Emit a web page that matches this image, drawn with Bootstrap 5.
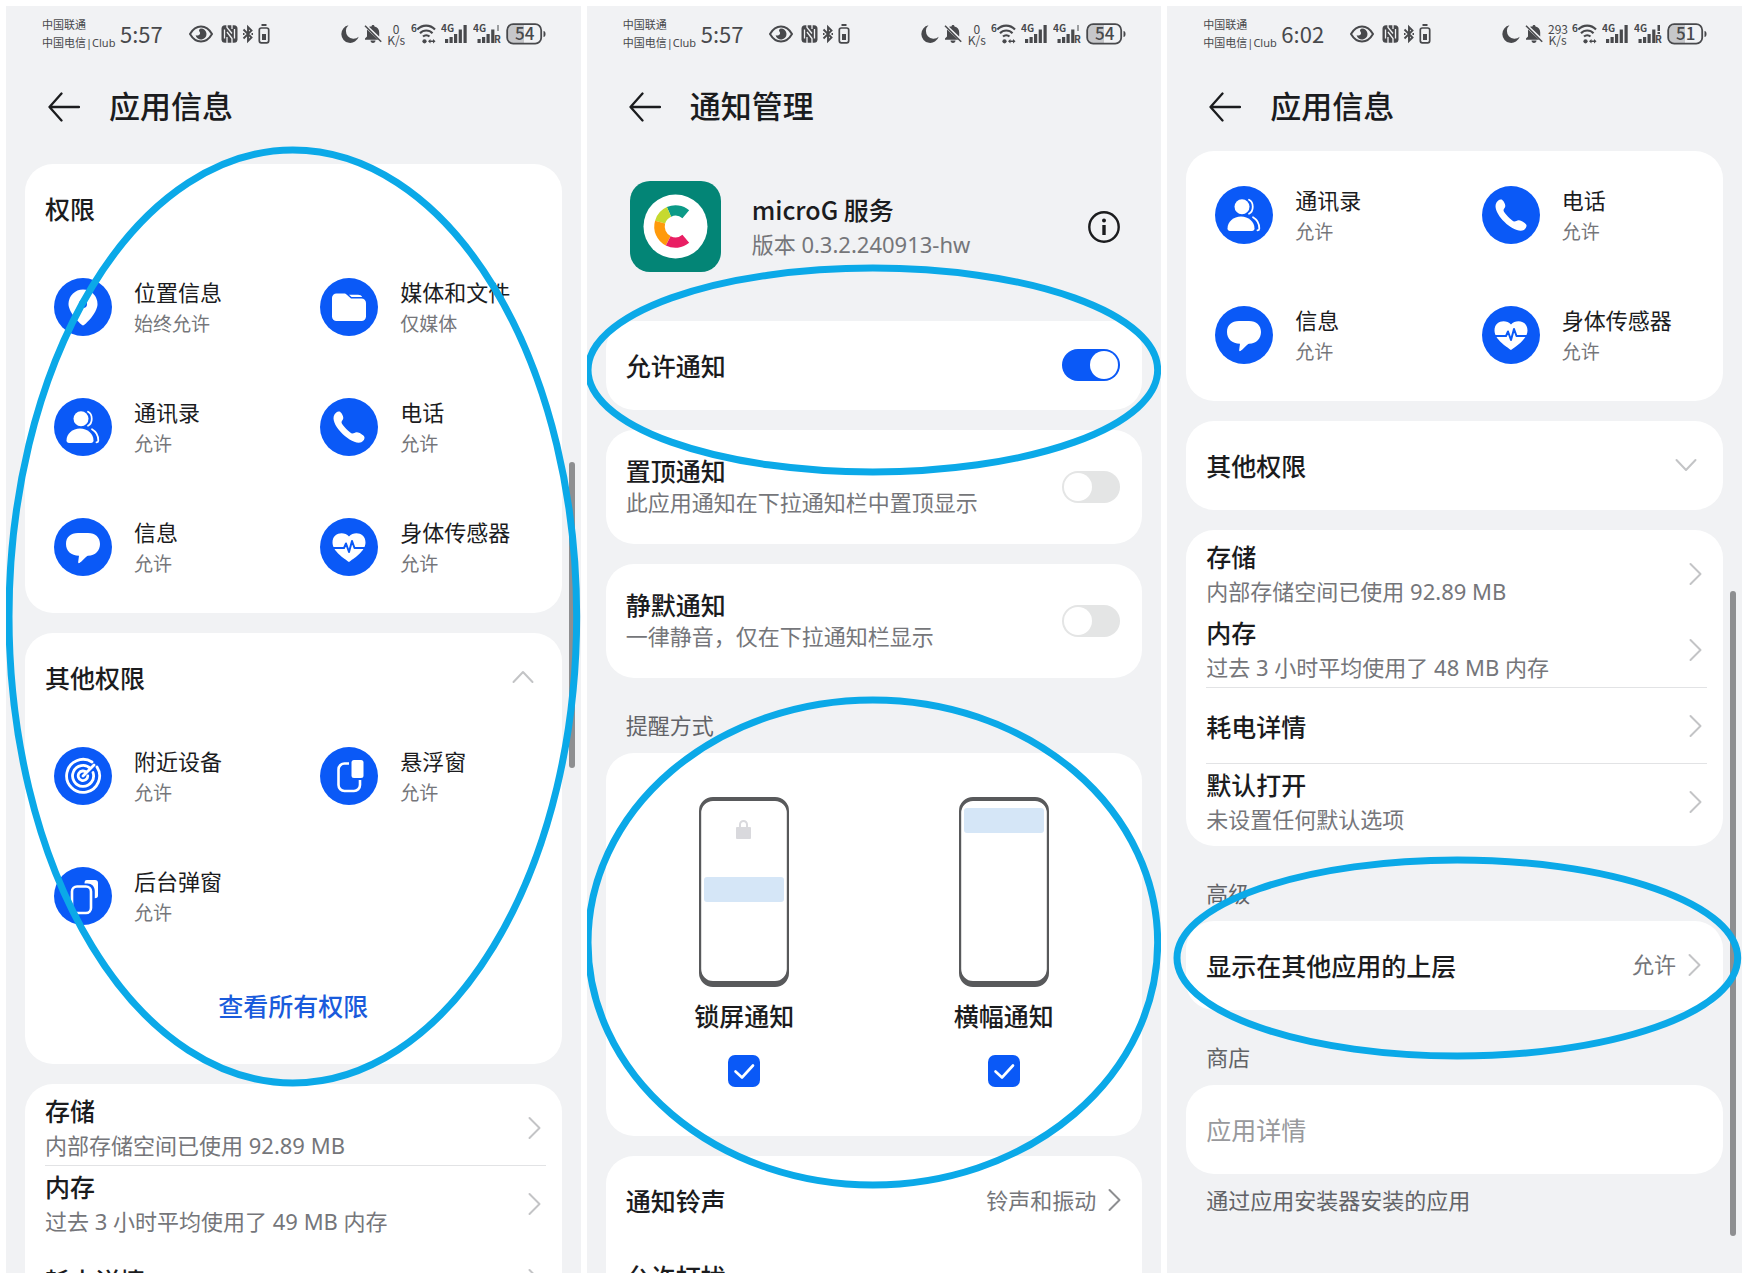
<!DOCTYPE html>
<html lang="zh-CN">
<head>
<meta charset="utf-8">
<meta name="viewport" content="width=device-width, initial-scale=1">
<title>microG 服务 权限设置</title>
<link href="https://cdn.jsdelivr.net/npm/bootstrap@5.3.0/dist/css/bootstrap.min.css" rel="stylesheet">
<style>
  :root { --ink:#1b1c1e; --sub:#75767a; --accent:#0a59f7; --ring:#0ba9e8; --edge:19px; }
  body { background:#fff; color:var(--ink); font-family:"Noto Sans CJK SC","Noto Sans",sans-serif; font-size:22px; overflow:hidden; }
  a, a:hover { color:inherit; text-decoration:none; }
  .screens { gap:6px; padding:6px 6px 7px; height:100vh; min-height:480px; }
  .phone-screen { position:relative; flex:1 1 0; min-width:0; overflow:hidden; background:#f1f2f4; }

  /* status bar */
  .statusbar { height:56px; padding:0 35px 0 36px; color:#48494c; }
  .carrier { font-family:"Noto Sans","Noto Sans CJK SC",sans-serif; font-size:11px; line-height:18px; white-space:nowrap; width:78px; }
  .clock { font-size:22px; line-height:32px; padding-bottom:2px; }
  .net-speed { font-size:12px; line-height:11px; text-align:center; width:19px; white-space:nowrap; }
  .statusbar svg { display:block; flex:none; fill:currentColor; }
  .statusbar .spacer-eye { margin-left:26px; }
  .status-right { gap:5px; }
  .status-right text { font-size:10px; font-weight:700; }
  .status-right .level { font-size:17px; font-weight:500; }

  /* title bar */
  .titlebar { height:89px; padding:0 42px; gap:29px; }
  .titlebar h1 { font-size:31px; line-height:40px; font-weight:500; margin:0; padding-bottom:4px; }
  .icon-btn { background:none; border:0; padding:0; line-height:0; color:var(--ink); }
  .app-head { padding:30px 41px 49px 43px; gap:31px; }

  /* tiles */
  .tile { background:#fff; border-radius:28px; margin:0 var(--edge); }
  .tile + .tile { margin-top:20px; }
  .first-tile { margin-top:13px; }
  .tile-title { font-size:25px; line-height:36px; font-weight:500; margin:0; }
  .tile-head { padding:26px 28px 21px 20px; width:100%; }
  .one-line { min-height:89px; padding:0 22px 2px 20px; }
  .two-line { min-height:114px; padding:0 22px 0 20px; }
  .two-line label { padding-bottom:2px; }
  .two-line .tile-title, .two-line .hint { line-height:32px; }
  .hint { font-family:"Noto Sans","Noto Sans CJK SC",sans-serif; color:var(--sub); line-height:35px; margin:0; font-size:22px; }
  .section-label { font-size:22px; line-height:34px; margin:0; padding:29px 0 12px 39px; color:#626367; font-weight:400; }
  .footnote { line-height:34px; margin:0; padding:8px 39px; color:#626367; }

  .perm-grid { padding:0 4px 6px 0; }
  .perm { min-height:120px; padding-left:29px; gap:22px; }
  .perm svg { flex:none; }
  .perm-name { line-height:31px; white-space:nowrap; }
  .perm-state { font-size:19px; line-height:31px; padding-bottom:1px; color:var(--sub); }
  .all-link { display:block; text-align:center; font-size:25px; line-height:36px; padding:25px 0 41px; font-weight:500; }
  .all-link, .all-link:hover { color:#1a5bdc; }

  .rows { padding:6px 16px 6px 20px; }
  .line-row { height:76px; padding-right:5px; }
  .line-row .tile-title { line-height:35px; }
  .line-row.ruled { box-shadow:inset 0 -1px #e2e3e5; }
  .chev { flex:none; fill:none; stroke:#c3c4c6; stroke-width:2; stroke-linecap:round; stroke-linejoin:round; }
  .chev.dark { stroke:#8d8e91; }
  .muted-title { color:#98999c; font-weight:400; }

  /* switches and tick boxes */
  .form-switch.toggle { padding:0; margin:0; min-height:0; line-height:0; }
  .form-switch.toggle .form-check-input { width:58px; height:32px; margin:0; border:0; background-color:#e4e5e5;
    background-image:url("data:image/svg+xml,%3csvg xmlns='http://www.w3.org/2000/svg' viewBox='0 0 32 32'%3e%3ccircle cx='16' cy='16' r='14' fill='white'/%3e%3c/svg%3e"); }
  .form-switch.toggle .form-check-input:checked { background-color:var(--accent); }
  .tick.form-check-input { float:none; width:32px; height:32px; margin:22px 0 0; border-radius:7px; border:0; display:block; }
  .tick.form-check-input:checked { background-color:var(--accent);
    background-image:url("data:image/svg+xml,%3csvg xmlns='http://www.w3.org/2000/svg' viewBox='0 0 32 32'%3e%3cpath d='M7.500 16.500l6.500 6 11-12' fill='none' stroke='white' stroke-width='2.600' stroke-linecap='round' stroke-linejoin='round'/%3e%3c/svg%3e"); }
  .ways { padding:44px 9px 49px; }
  .ways label { margin-top:10px; }

  /* hand-drawn marks and scroll thumbs lie over the screens */
  .ring { position:absolute; overflow:visible; pointer-events:none; fill:none; stroke:var(--ring); stroke-width:7; z-index:3; }
  .ring-perms  { left:3px; top:144px; width:calc(100% - 7px); height:933px; }
  .ring-allow  { left:1px; top:262px; width:calc(100% - 5px); height:204px; }
  .ring-ways   { left:1px; top:694px; width:calc(100% - 5px); height:485px; }
  .ring-overlay{ left:10px; top:854px; width:calc(100% - 14px); height:196px; }
  .thumb { position:absolute; right:6px; width:6px; border-radius:3px; background:#8e8f91; z-index:2; }
  .thumb-a { top:456px; height:306px; }
  .thumb-b { top:585px; height:645px; }
</style>
</head>
<body>

<svg width="0" height="0" class="position-absolute" aria-hidden="true">
  <symbol id="i-eye" viewBox="0 0 24 18"><path d="M1 9C4 3.800 8 1.500 12 1.500S20 3.800 23 9c-3 5.200-7 7.500-11 7.500S4 14.200 1 9z" fill="none" stroke="currentColor" stroke-width="2"/><path d="M12 3.500a5.500 5.500 0 1 1-5.400 6.500c1 .8 3 .8 4-.4s.3-2.600-.6-3.600c0-1.300.8-2.500 2-2.500z"/></symbol>
  <symbol id="i-nfc" viewBox="0 0 17 18"><rect x=".5" y=".3" width="16" height="17.400" rx="3.500"/><path d="M6 0v2.500l5 6M3.500 4.500v9M6 7l5 6.500v4.500M6 12v6M11 0v4M13.500 4v9.500" fill="none" stroke="#f1f2f4" stroke-width="1.300"/></symbol>
  <symbol id="i-bt" viewBox="0 0 12 20"><path d="M1.500 5.500l8 8L6 17V3l3.500 3.500-8 8M1 10h1.500M9.500 10H11" fill="none" stroke="currentColor" stroke-width="1.900"/></symbol>
  <symbol id="i-cell" viewBox="0 0 12 20"><path d="M3.500 0h5v2h-5z"/><rect x="1.300" y="4" width="9.400" height="14.800" rx="2" fill="none" stroke="currentColor" stroke-width="1.700"/><path d="M4 10h4v6H4z"/></symbol>
  <symbol id="i-moon" viewBox="0 0 18 18"><path d="M7.500.3A8.900 8.900 0 1 0 17.700 11.800 6.600 6.600 0 0 1 7.500.3z"/></symbol>
  <symbol id="i-mute" viewBox="0 0 18 18"><path d="M9 0c1 0 1.500.6 1.500 1.500C13.500 2.200 15.200 4.500 15.200 7v4.500L5 1.800C5.800 1.600 6.800 1.500 7.500 1.500 7.500.6 8 0 9 0zM3 4.500l11.200 10.300H1v-1.300l2-2V7c0-.8-.1-1.700 0-2.500zM6.500 15.500h5c0 1.600-1 2.500-2.500 2.500s-2.500-.9-2.500-2.500z"/><path d="M1 .8l16.200 16" stroke="currentColor" stroke-width="1.500"/></symbol>
  <symbol id="i-wifi" viewBox="0 0 25 20"><g fill="none" stroke="currentColor" stroke-width="2.100"><path d="M6.300 5.500a12 12 0 0 1 17.700 0M9 9.200a8.500 8.500 0 0 1 12.500 0M12 12.600a4.700 4.700 0 0 1 6.500 0"/></g><circle cx="13.500" cy="17.300" r="2.100"/><path d="M17 17.300l2.500-2.200v4.400zM24.500 17.300L22 15.100v4.400zM19 16.600h3V18h-3z"/></symbol>
  <symbol id="i-bars" viewBox="0 0 27 20"><path d="M4 15h3.200v4H4zM8.500 13h3.200v6H8.500zM13 10h3.200v9H13zM17.700 5.500h3.200V19h-3.200z"/></symbol>
  <symbol id="i-batt" viewBox="0 0 40 22"><path d="M7 2h11v18H7a5 5 0 0 1-5-5V7a5 5 0 0 1 5-5z" opacity=".25"/><rect x="1.200" y="1.200" width="34" height="19.500" rx="6" fill="none" stroke="currentColor" stroke-width="1.800"/><path d="M37.500 8c1.500.3 2 1.300 2 3s-.5 2.700-2 3z"/></symbol>
  <symbol id="i-back" viewBox="0 0 32 30"><path d="M31 15H1.500M13.500 1.500L1.500 15l12 13.500" fill="none" stroke="currentColor" stroke-width="2.300" stroke-linecap="round" stroke-linejoin="round"/></symbol>
  <symbol id="i-right" viewBox="0 0 13 24"><path d="M1.500 2l10 10-10 10"/></symbol>
  <symbol id="i-up" viewBox="0 0 22 14"><path d="M1.500 12L11 2l9.500 10"/></symbol>
  <symbol id="i-down" viewBox="0 0 22 14"><path d="M1.500 2L11 12l9.500-10"/></symbol>

  <symbol id="p-pin" viewBox="-29 -29 58 58"><circle r="29" fill="#0a59f7"/><path d="M0 18.500C-1.500 18.500-14.500 6-14.500-3a14.500 14.500 0 0 1 29 0c0 9-13 21.500-14.500 21.500z" fill="#fff"/><circle cx="0" cy="-3" r="4" fill="#0a59f7"/></symbol>
  <symbol id="p-folder" viewBox="-29 -29 58 58"><circle r="29" fill="#0a59f7"/><path d="M-17-9a4.500 4.500 0 0 1 4.500-4.500h7.500c1.200 0 2 .4 2.800 1.200L2-8.500h10.500a4.500 4.500 0 0 1 4.500 4.500V9.500a4.500 4.500 0 0 1-4.500 4.500h-25A4.500 4.500 0 0 1-17 9.500z" fill="#fff"/><path d="M0-12.300h9c2 0 3.500.8 4.200 2.200H2.500z" fill="#fff"/></symbol>
  <symbol id="p-people" viewBox="-29 -29 58 58"><circle r="29" fill="#0a59f7"/><g fill="#fff"><circle cx="-2" cy="-8.300" r="7.500"/><path d="M-16.500 13.500C-16.500 6.800-10.500 1.500-3 1.500s13.500 5.300 13.500 12c0 1.600-1 2.500-2.500 2.500h-22c-1.500 0-2.500-.9-2.500-2.500z"/></g><path d="M5-15.300c5 2.500 5 11.500 0 14M9 2.300c4.300 2.500 6.300 6.200 6.300 11.200 0 1-.6 1.700-1.800 1.900" fill="none" stroke="#fff" stroke-width="1.800" stroke-linecap="round"/></symbol>
  <symbol id="p-call" viewBox="-29 -29 58 58"><circle r="29" fill="#0a59f7"/><path d="M-14.500-12.500c1-2 3-3.500 5-3 1.500.5 3.800 4 3.800 6.500 0 2-1.800 2.800-1.800 4.200 0 2.300 8.500 11.300 11 11.300 1.400 0 2.500-1.500 4.500-1.300 2.500.300 6.500 2.800 7.300 4.500.9 2-1 4.500-3 5.500C2.500 19-20.500-3-14.500-12.500z" fill="#fff"/></symbol>
  <symbol id="p-chat" viewBox="-29 -29 58 58"><circle r="29" fill="#0a59f7"/><path d="M-5-14H5c7.500 0 12 4.500 12 11S12.500 8.500 5 8.800C3.500 9-1.500 15-3.500 16c-1 .5-1.500-.2-1.300-1.200l.8-6C-12 8.500-17 4-17-3s4.500-11 12-11z" fill="#fff"/></symbol>
  <symbol id="p-heart" viewBox="-29 -29 58 58"><circle r="29" fill="#0a59f7"/><path d="M0-10.500C5-16 16.500-14.500 16.500-4.500 16.500 4.500 4 12 0 15-4 12-16.500 4.500-16.500-4.500-16.500-14.500-5-16 0-10.500z" fill="#fff"/><path d="M-18 1h13l2-4.500L0 5l3-11 2.500 7H18" fill="none" stroke="#0a59f7" stroke-width="2" stroke-linejoin="round"/></symbol>
  <symbol id="p-radar" viewBox="-29 -29 58 58"><circle r="29" fill="#0a59f7"/><g fill="none" stroke="#fff" stroke-width="2.800" stroke-linecap="round"><path d="M14-9A16.500 16.500 0 1 1 9-14M7.500-7.500A10.500 10.500 0 1 0 10-3.500M3.500-3.500a4.800 4.800 0 1 0 1.300 3.500M0 0L11-11"/></g></symbol>
  <symbol id="p-float" viewBox="-29 -29 58 58"><circle r="29" fill="#0a59f7"/><path d="M0-12.500h-4.500a6 6 0 0 0-6 6V9a6 6 0 0 0 6 6H5a6 6 0 0 0 6-6V4" fill="none" stroke="#fff" stroke-width="2.600"/><rect x="2.500" y="-16" width="12" height="18" rx="2.500" fill="#fff"/></symbol>
  <symbol id="p-pop" viewBox="-29 -29 58 58"><circle r="29" fill="#0a59f7"/><path d="M4-16h8a3 3 0 0 1 3 3v12.500c0 1.800-1 2.700-3.200 2.700V-5c0-4.500-3-7.500-7.300-7.500h-3C1.500-15 2.200-16 4-16z" fill="#fff"/><rect x="-11" y="-9.500" width="19" height="26.500" rx="5" fill="none" stroke="#fff" stroke-width="2.600"/></symbol>
  <symbol id="handset" viewBox="0 0 90 190"><path fill-rule="evenodd" fill="#58595b" d="M14 0h62a14 14 0 0 1 14 14v162a14 14 0 0 1-14 14H14a14 14 0 0 1-14-14V14A14 14 0 0 1 14 0zm0 4A12 12 0 0 0 2.200 16v156A12 12 0 0 0 14 184h62a12 12 0 0 0 11.800-12V16A12 12 0 0 0 76 4z"/></symbol>
</svg>

<main class="screens d-flex">

  <!-- 应用信息：权限 -->
  <section class="phone-screen">
    <div class="statusbar d-flex align-items-center">
      <div class="carrier">中国联通<br>中国电信|Club</div>
      <div class="clock">5:57</div>
      <svg class="spacer-eye" width="24" height="18"><use href="#i-eye"/></svg>
      <svg class="ms-2" width="17" height="18"><use href="#i-nfc"/></svg>
      <svg class="ms-1" width="12" height="20"><use href="#i-bt"/></svg>
      <svg class="ms-1" width="12" height="20"><use href="#i-cell"/></svg>
      <div class="status-right d-flex align-items-center ms-auto">
        <svg width="18" height="18"><use href="#i-moon"/></svg>
        <svg width="18" height="18"><use href="#i-mute"/></svg>
        <div class="net-speed">0<br>K/s</div>
        <svg width="25" height="20"><use href="#i-wifi"/><text x="0" y="8">6</text></svg>
        <svg width="27" height="20"><use href="#i-bars"/><path d="M22.500 1h3.200v18h-3.200z"/><text x="0" y="8">4G</text></svg>
        <svg width="28" height="20"><use href="#i-bars"/><path d="M24 1h2v6h-2z" opacity=".5"/><text x="0" y="8">4G</text><text x="21" y="19">R</text></svg>
        <svg width="40" height="22"><use href="#i-batt"/><text class="level" x="9" y="17">54</text></svg>
      </div>
    </div>
    <header class="titlebar d-flex align-items-center">
      <button class="icon-btn" type="button" aria-label="返回"><svg width="32" height="30"><use href="#i-back"/></svg></button>
      <h1>应用信息</h1>
    </header>

    <div class="tile first-tile">
      <div class="tile-head"><h2 class="tile-title">权限</h2></div>
      <div class="perm-grid row g-0">
        <a href="#" class="perm col-6 d-flex align-items-center"><svg width="58" height="58"><use href="#p-pin"/></svg><div><div class="perm-name">位置信息</div><div class="perm-state">始终允许</div></div></a>
        <a href="#" class="perm col-6 d-flex align-items-center"><svg width="58" height="58"><use href="#p-folder"/></svg><div><div class="perm-name">媒体和文件</div><div class="perm-state">仅媒体</div></div></a>
        <a href="#" class="perm col-6 d-flex align-items-center"><svg width="58" height="58"><use href="#p-people"/></svg><div><div class="perm-name">通讯录</div><div class="perm-state">允许</div></div></a>
        <a href="#" class="perm col-6 d-flex align-items-center"><svg width="58" height="58"><use href="#p-call"/></svg><div><div class="perm-name">电话</div><div class="perm-state">允许</div></div></a>
        <a href="#" class="perm col-6 d-flex align-items-center"><svg width="58" height="58"><use href="#p-chat"/></svg><div><div class="perm-name">信息</div><div class="perm-state">允许</div></div></a>
        <a href="#" class="perm col-6 d-flex align-items-center"><svg width="58" height="58"><use href="#p-heart"/></svg><div><div class="perm-name">身体传感器</div><div class="perm-state">允许</div></div></a>
      </div>
    </div>

    <div class="tile">
      <button type="button" class="icon-btn tile-head d-flex align-items-center justify-content-between" aria-expanded="true">
        <span class="tile-title">其他权限</span><svg class="chev" width="22" height="14"><use href="#i-up"/></svg>
      </button>
      <div class="perm-grid row g-0">
        <a href="#" class="perm col-6 d-flex align-items-center"><svg width="58" height="58"><use href="#p-radar"/></svg><div><div class="perm-name">附近设备</div><div class="perm-state">允许</div></div></a>
        <a href="#" class="perm col-6 d-flex align-items-center"><svg width="58" height="58"><use href="#p-float"/></svg><div><div class="perm-name">悬浮窗</div><div class="perm-state">允许</div></div></a>
        <a href="#" class="perm col-6 d-flex align-items-center"><svg width="58" height="58"><use href="#p-pop"/></svg><div><div class="perm-name">后台弹窗</div><div class="perm-state">允许</div></div></a>
      </div>
      <a href="#" class="all-link">查看所有权限</a>
    </div>

    <div class="tile rows">
      <a href="#" class="line-row ruled d-flex align-items-center justify-content-between"><div><div class="tile-title">存储</div><p class="hint">内部存储空间已使用 92.89 MB</p></div><svg class="chev" width="13" height="24"><use href="#i-right"/></svg></a>
      <a href="#" class="line-row d-flex align-items-center justify-content-between"><div><div class="tile-title">内存</div><p class="hint">过去 3 小时平均使用了 49 MB 内存</p></div><svg class="chev" width="13" height="24"><use href="#i-right"/></svg></a>
      <a href="#" class="line-row d-flex align-items-center justify-content-between"><div class="tile-title">耗电详情</div><svg class="chev" width="13" height="24"><use href="#i-right"/></svg></a>
    </div>

    <div class="thumb thumb-a"></div>
    <svg class="ring ring-perms" viewBox="0 0 100 100" preserveAspectRatio="none" aria-hidden="true"><ellipse cx="50" cy="50" rx="50" ry="50" vector-effect="non-scaling-stroke"/></svg>
  </section>

  <!-- 通知管理 -->
  <section class="phone-screen">
    <div class="statusbar d-flex align-items-center">
      <div class="carrier">中国联通<br>中国电信|Club</div>
      <div class="clock">5:57</div>
      <svg class="spacer-eye" width="24" height="18"><use href="#i-eye"/></svg>
      <svg class="ms-2" width="17" height="18"><use href="#i-nfc"/></svg>
      <svg class="ms-1" width="12" height="20"><use href="#i-bt"/></svg>
      <svg class="ms-1" width="12" height="20"><use href="#i-cell"/></svg>
      <div class="status-right d-flex align-items-center ms-auto">
        <svg width="18" height="18"><use href="#i-moon"/></svg>
        <svg width="18" height="18"><use href="#i-mute"/></svg>
        <div class="net-speed">0<br>K/s</div>
        <svg width="25" height="20"><use href="#i-wifi"/><text x="0" y="8">6</text></svg>
        <svg width="27" height="20"><use href="#i-bars"/><path d="M22.500 1h3.200v18h-3.200z"/><text x="0" y="8">4G</text></svg>
        <svg width="28" height="20"><use href="#i-bars"/><path d="M24 1h2v6h-2z" opacity=".5"/><text x="0" y="8">4G</text><text x="21" y="19">R</text></svg>
        <svg width="40" height="22"><use href="#i-batt"/><text class="level" x="9" y="17">54</text></svg>
      </div>
    </div>
    <header class="titlebar d-flex align-items-center">
      <button class="icon-btn" type="button" aria-label="返回"><svg width="32" height="30"><use href="#i-back"/></svg></button>
      <h1>通知管理</h1>
    </header>

    <div class="app-head d-flex align-items-center">
      <svg width="91" height="91" viewBox="0 0 91 91" class="flex-shrink-0" aria-hidden="true">
        <rect width="91" height="91" rx="20" fill="#038576"/>
        <circle cx="45.500" cy="45.500" r="32" fill="#fff"/>
        <g transform="translate(45.500 45.500)" fill="none" stroke-width="10.500">
          <path d="M10.300-12.300A16 16 0 0 0-6.500-14.600" stroke="#0b9a87"/>
          <path d="M-6.500-14.600A16 16 0 0 0-15.400-4.400" stroke="#c6d92f"/>
          <path d="M-15.400-4.400A16 16 0 0 0-7.300 14.300" stroke="#ff9a0b"/>
          <path d="M-7.300 14.300A16 16 0 0 0 10.300 12.300" stroke="#e91e63"/>
        </g>
      </svg>
      <div class="flex-grow-1"><h2 class="tile-title">microG 服务</h2><p class="hint">版本 0.3.2.240913-hw</p></div>
      <button class="icon-btn" type="button" aria-label="应用信息">
        <svg width="32" height="32" viewBox="0 0 32 32"><circle cx="16" cy="16" r="14.700" fill="none" stroke="currentColor" stroke-width="2.400"/><circle cx="16" cy="9.500" r="2" fill="currentColor"/><path d="M16 14v10" stroke="currentColor" stroke-width="3.400"/></svg>
      </button>
    </div>

    <div class="tile one-line d-flex align-items-center justify-content-between">
      <label class="tile-title" for="sw-allow">允许通知</label>
      <div class="form-check form-switch toggle"><input class="form-check-input" type="checkbox" role="switch" id="sw-allow" checked></div>
    </div>
    <div class="tile two-line d-flex align-items-center justify-content-between">
      <label for="sw-pin"><span class="tile-title d-block">置顶通知</span><span class="hint d-block">此应用通知在下拉通知栏中置顶显示</span></label>
      <div class="form-check form-switch toggle"><input class="form-check-input" type="checkbox" role="switch" id="sw-pin"></div>
    </div>
    <div class="tile two-line d-flex align-items-center justify-content-between">
      <label for="sw-quiet"><span class="tile-title d-block">静默通知</span><span class="hint d-block">一律静音，仅在下拉通知栏显示</span></label>
      <div class="form-check form-switch toggle"><input class="form-check-input" type="checkbox" role="switch" id="sw-quiet"></div>
    </div>

    <h3 class="section-label">提醒方式</h3>
    <div class="tile">
      <div class="ways row g-0">
        <div class="col-6 d-flex flex-column align-items-center">
          <svg width="90" height="190" viewBox="0 0 90 190" aria-hidden="true"><use href="#handset"/><rect x="5" y="80" width="80" height="25" rx="3" fill="#d5e6f7"/><rect x="37" y="30" width="15" height="12" rx="1" fill="#d9d9dd"/><path d="M41 31v-3.500a3.500 3.500 0 0 1 7 0V31" fill="none" stroke="#d9d9dd" stroke-width="2"/></svg>
          <label class="tile-title" for="ck-lock">锁屏通知</label>
          <input class="form-check-input tick" type="checkbox" id="ck-lock" checked>
        </div>
        <div class="col-6 d-flex flex-column align-items-center">
          <svg width="90" height="190" viewBox="0 0 90 190" aria-hidden="true"><use href="#handset"/><rect x="5" y="11" width="80" height="25" rx="3" fill="#d5e6f7"/></svg>
          <label class="tile-title" for="ck-banner">横幅通知</label>
          <input class="form-check-input tick" type="checkbox" id="ck-banner" checked>
        </div>
      </div>
    </div>
    <div class="tile rows">
      <a href="#" class="line-row d-flex align-items-center"><span class="tile-title me-auto">通知铃声</span><span class="hint me-2 pe-1">铃声和振动</span><svg class="chev dark" width="13" height="24"><use href="#i-right"/></svg></a>
      <a href="#" class="line-row d-flex align-items-center"><span class="tile-title">允许打扰</span></a>
    </div>

    <svg class="ring ring-allow" viewBox="0 0 100 100" preserveAspectRatio="none" aria-hidden="true"><ellipse cx="50" cy="50" rx="50" ry="50" vector-effect="non-scaling-stroke"/></svg>
    <svg class="ring ring-ways" viewBox="0 0 100 100" preserveAspectRatio="none" aria-hidden="true"><ellipse cx="50" cy="50" rx="50" ry="50" vector-effect="non-scaling-stroke"/></svg>
  </section>

  <!-- 应用信息：高级 -->
  <section class="phone-screen">
    <div class="statusbar d-flex align-items-center">
      <div class="carrier">中国联通<br>中国电信|Club</div>
      <div class="clock">6:02</div>
      <svg class="spacer-eye" width="24" height="18"><use href="#i-eye"/></svg>
      <svg class="ms-2" width="17" height="18"><use href="#i-nfc"/></svg>
      <svg class="ms-1" width="12" height="20"><use href="#i-bt"/></svg>
      <svg class="ms-1" width="12" height="20"><use href="#i-cell"/></svg>
      <div class="status-right d-flex align-items-center ms-auto">
        <svg width="18" height="18"><use href="#i-moon"/></svg>
        <svg width="18" height="18"><use href="#i-mute"/></svg>
        <div class="net-speed">293<br>K/s</div>
        <svg width="25" height="20"><use href="#i-wifi"/><text x="0" y="8">6</text></svg>
        <svg width="27" height="20"><use href="#i-bars"/><path d="M22.500 1h3.200v18h-3.200z"/><text x="0" y="8">4G</text></svg>
        <svg width="28" height="20"><use href="#i-bars"/><path d="M23.500 1H26v6h-2.500zM23.500 8H26v2h-2.500z"/><text x="0" y="8">4G</text><text x="21" y="19">R</text></svg>
        <svg width="40" height="22"><use href="#i-batt"/><text class="level" x="9" y="17">51</text></svg>
      </div>
    </div>
    <header class="titlebar d-flex align-items-center">
      <button class="icon-btn" type="button" aria-label="返回"><svg width="32" height="30"><use href="#i-back"/></svg></button>
      <h1>应用信息</h1>
    </header>

    <div class="tile">
      <div class="perm-grid row g-0 pt-1">
        <a href="#" class="perm col-6 d-flex align-items-center"><svg width="58" height="58"><use href="#p-people"/></svg><div><div class="perm-name">通讯录</div><div class="perm-state">允许</div></div></a>
        <a href="#" class="perm col-6 d-flex align-items-center"><svg width="58" height="58"><use href="#p-call"/></svg><div><div class="perm-name">电话</div><div class="perm-state">允许</div></div></a>
        <a href="#" class="perm col-6 d-flex align-items-center"><svg width="58" height="58"><use href="#p-chat"/></svg><div><div class="perm-name">信息</div><div class="perm-state">允许</div></div></a>
        <a href="#" class="perm col-6 d-flex align-items-center"><svg width="58" height="58"><use href="#p-heart"/></svg><div><div class="perm-name">身体传感器</div><div class="perm-state">允许</div></div></a>
      </div>
    </div>

    <div class="tile">
      <button type="button" class="icon-btn one-line w-100 d-flex align-items-center justify-content-between" aria-expanded="false">
        <span class="tile-title">其他权限</span><svg class="chev me-1" width="22" height="14"><use href="#i-down"/></svg>
      </button>
    </div>

    <div class="tile rows">
      <a href="#" class="line-row d-flex align-items-center justify-content-between"><div><div class="tile-title">存储</div><p class="hint">内部存储空间已使用 92.89 MB</p></div><svg class="chev" width="13" height="24"><use href="#i-right"/></svg></a>
      <a href="#" class="line-row ruled d-flex align-items-center justify-content-between"><div><div class="tile-title">内存</div><p class="hint">过去 3 小时平均使用了 48 MB 内存</p></div><svg class="chev" width="13" height="24"><use href="#i-right"/></svg></a>
      <a href="#" class="line-row ruled d-flex align-items-center justify-content-between"><div class="tile-title">耗电详情</div><svg class="chev" width="13" height="24"><use href="#i-right"/></svg></a>
      <a href="#" class="line-row d-flex align-items-center justify-content-between"><div><div class="tile-title">默认打开</div><p class="hint">未设置任何默认选项</p></div><svg class="chev" width="13" height="24"><use href="#i-right"/></svg></a>
    </div>

    <h3 class="section-label">高级</h3>
    <a href="#" class="tile one-line d-flex align-items-center"><span class="tile-title me-auto">显示在其他应用的上层</span><span class="hint me-2 pe-1">允许</span><svg class="chev" width="13" height="24"><use href="#i-right"/></svg></a>

    <h3 class="section-label">商店</h3>
    <div class="tile one-line d-flex align-items-center"><span class="tile-title muted-title">应用详情</span></div>
    <p class="footnote">通过应用安装器安装的应用</p>

    <div class="thumb thumb-b"></div>
    <svg class="ring ring-overlay" viewBox="0 0 100 100" preserveAspectRatio="none" aria-hidden="true"><ellipse cx="50" cy="50" rx="50" ry="50" vector-effect="non-scaling-stroke"/></svg>
  </section>
</main>

<script src="https://cdn.jsdelivr.net/npm/bootstrap@5.3.0/dist/js/bootstrap.bundle.min.js"></script>
</body>
</html>
